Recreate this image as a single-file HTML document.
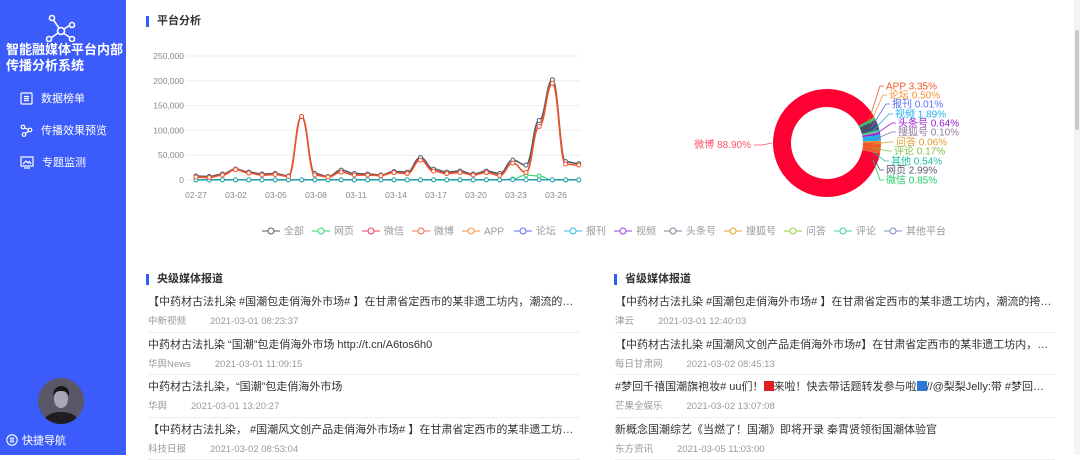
<!DOCTYPE html>
<html><head><meta charset="utf-8"><style>
*{margin:0;padding:0;box-sizing:border-box}
body{width:1080px;height:455px;overflow:hidden;background:#fff;font-family:"Liberation Sans","Noto Sans CJK SC",sans-serif;position:relative}
.side{position:absolute;left:0;top:0;width:126px;height:455px;background:#3b5bfb;color:#fff}
.title{position:absolute;left:6px;top:42px;font-size:13px;font-weight:bold;line-height:16px}
.nav{position:absolute;left:20px;font-size:11px;display:flex;align-items:center}
.nav svg{margin-right:8px}
.main{position:absolute;left:126px;top:0;width:954px;height:455px}
.h{position:absolute;font-size:11px;font-weight:bold;color:#333;padding-left:8px;border-left:3px solid #2f5bff;line-height:11px}
.list{position:absolute;width:432px}
.it{height:42.5px;border-bottom:1px solid #eee;padding-top:5px}
.it .t{font-size:11px;color:#333;white-space:nowrap;overflow:hidden;text-overflow:ellipsis;line-height:14px}
.it .m{font-size:9.5px;color:#999;margin-top:4px}
.it .m span{margin-left:24px}
.scroll{position:absolute;right:0;top:0;width:6px;height:455px;background:#f4f4f4}
.scroll div{position:absolute;left:1px;top:30px;width:4px;height:100px;background:#c8c8c8;border-radius:2px}
</style></head><body>
<div class="side">
<svg style="position:absolute;left:44px;top:14px" width="34" height="28" viewBox="0 0 34 28" fill="none" stroke="#fff" stroke-width="1.6"><circle cx="8" cy="4" r="2.5"/><circle cx="28" cy="11" r="2.5"/><circle cx="17" cy="17" r="3.5"/><circle cx="5" cy="25" r="2.5"/><circle cx="28" cy="25" r="2.5"/><path d="M9.5 6L15 14M25.5 11.5L20 15M7 24L14 19M20 19.5L26 23.5"/></svg>
<div class="title">智能融媒体平台内部<br>传播分析系统</div>
<div class="nav" style="top:90px"><svg width="13" height="13" viewBox="0 0 13 13" fill="none" stroke="#fff" stroke-width="1.2"><rect x="1" y="1" width="11" height="11" rx="1"/><path d="M4 4.5h5M4 6.5h5M4 8.5h5"/></svg>数据榜单</div>
<div class="nav" style="top:122px"><svg width="13" height="13" viewBox="0 0 13 13" fill="none" stroke="#fff" stroke-width="1.2"><circle cx="3" cy="3" r="1.8"/><circle cx="10" cy="6" r="1.8"/><circle cx="4" cy="10.5" r="1.8"/><path d="M4.6 4L8.4 5.5M8.5 7L5.5 9.5"/></svg>传播效果预览</div>
<div class="nav" style="top:154px"><svg width="14" height="13" viewBox="0 0 14 13" fill="none" stroke="#fff" stroke-width="1.2"><rect x="1" y="1" width="12" height="9"/><path d="M3 8l3-3 2 2 1.5-1.5L11 8M4 12h6"/></svg>专题监测</div>
<svg style="position:absolute;left:38px;top:378px" width="46" height="46" viewBox="0 0 46 46"><defs><clipPath id="c"><circle cx="23" cy="23" r="23"/></clipPath></defs><g clip-path="url(#c)"><rect width="46" height="46" fill="#5a5868"/><path d="M4 46c2-9 10-12 19-12s17 3 19 12z" fill="#1e1d24"/><ellipse cx="23" cy="21" rx="7" ry="9" fill="#a9a7b4"/><path d="M15 18c0-7 4-10 8-10s9 2 8 10c-2-4-4-5-8-5s-6 1-8 5z" fill="#18171c"/></g></svg>
<div class="nav" style="left:6px;top:432px"><svg width="12" height="12" viewBox="0 0 12 12" fill="none" stroke="#fff" stroke-width="1.1"><circle cx="6" cy="6" r="5.2"/><path d="M3.8 4.2h4.4M3.8 6h4.4M3.8 7.8h4.4"/></svg><span style="margin-left:-4px">快捷导航</span></div>
</div>
<div class="main">
<div class="h" style="left:20px;top:16px">平台分析</div>
<div class="h" style="left:20px;top:274px">央级媒体报道</div>
<div class="h" style="left:488px;top:274px">省级媒体报道</div>
<div class="scroll"><div></div></div>
</div>
<svg id="ch" style="position:absolute;left:0;top:0" width="1080" height="260" font-family="Liberation Sans, Noto Sans CJK SC, sans-serif"></svg>
<div class="list" style="left:148px;top:290px">
<div class="it"><div class="t">【中药材古法扎染 #国潮包走俏海外市场# 】在甘肃省定西市的某非遗工坊内，潮流的挎包、斜挎包等…</div><div class="m">中新视频<span>2021-03-01 08:23:37</span></div></div>
<div class="it"><div class="t">中药材古法扎染 “国潮”包走俏海外市场 http://t.cn/A6tos6h0</div><div class="m">华舆News<span>2021-03-01 11:09:15</span></div></div>
<div class="it"><div class="t">中药材古法扎染，“国潮”包走俏海外市场</div><div class="m">华舆<span>2021-03-01 13:20:27</span></div></div>
<div class="it"><div class="t">【中药材古法扎染， #国潮风文创产品走俏海外市场# 】在甘肃省定西市的某非遗工坊内，潮流的挎包…</div><div class="m">科技日报<span>2021-03-02 08:53:04</span></div></div>
</div>
<div class="list" style="left:615px;top:290px;width:440px">
<div class="it"><div class="t">【中药材古法扎染 #国潮包走俏海外市场# 】在甘肃省定西市的某非遗工坊内，潮流的挎包、时尚的…</div><div class="m">津云<span>2021-03-01 12:40:03</span></div></div>
<div class="it"><div class="t">【中药材古法扎染 #国潮风文创产品走俏海外市场#】在甘肃省定西市的某非遗工坊内，潮流的挎包…</div><div class="m">每日甘肃网<span>2021-03-02 08:45:13</span></div></div>
<div class="it"><div class="t">#梦回千禧国潮旗袍妆# uu们！<span style="display:inline-block;width:10px;height:10px;background:#e02020;vertical-align:-1px"></span>来啦！快去带话题转发参与啦<span style="display:inline-block;width:10px;height:10px;background:#2a7ad8;vertical-align:-1px"></span>//@梨梨Jelly:带 #梦回千禧国潮旗袍妆#…</div><div class="m">芒果全娱乐<span>2021-03-02 13:07:08</span></div></div>
<div class="it"><div class="t">新概念国潮综艺《当燃了！国潮》即将开录 秦霄贤领衔国潮体验官</div><div class="m">东方资讯<span>2021-03-05 11:03:00</span></div></div>
</div>
<script>
var s='';
var Y=function(v){return 180-v*0.496};
var yl=['0','50,000','100,000','150,000','200,000','250,000'];
for(var i=0;i<6;i++){var y=180-i*24.8;s+='<line x1="186" x2="580" y1="'+y+'" y2="'+y+'" stroke="#eee"/><text x="184" y="'+(y+3)+'" font-size="8.5" fill="#888" text-anchor="end">'+yl[i]+'</text>';}
var xl=['02-27','03-02','03-05','03-08','03-11','03-14','03-17','03-20','03-23','03-26'];
for(i=0;i<10;i++)s+='<text x="'+(196+i*40)+'" y="198" font-size="8.5" fill="#888" text-anchor="middle">'+xl[i]+'</text>';
var A=[8,7,12,22,16,12,13,8,128,13,7,20,13,12,10,17,16,45,22,16,18,12,18,13,40,30,120,202,37,33];
var W=[6,5,10,21,14,10,11,7,128,10,6,16,10,10,9,15,13,40,18,13,15,10,15,9,34,15,108,195,32,30];
var G=[];for(i=0;i<30;i++)G.push(i==25?10:i==26?8:i==24?2:0);
function X(i){return 196+i*13.2}
function path(d,c,w){var p='M'+X(0)+' '+Y(d[0]);for(var i=1;i<d.length;i++){var x0=X(i-1),x1=X(i);p+=' C'+(x0+6)+' '+Y(d[i-1])+' '+(x1-6)+' '+Y(d[i])+' '+x1+' '+Y(d[i]);}
var r='<path d="'+p+'" fill="none" stroke="'+c+'" stroke-width="'+w+'"/>';for(i=0;i<d.length;i++)r+='<circle cx="'+X(i)+'" cy="'+Y(d[i])+'" r="2" fill="#fff" stroke="'+c+'" stroke-width="1"/>';return r;}
var Z=[];for(i=0;i<30;i++)Z.push(0.5);
s+=path(G,'#2bd96a',1.2)+path(Z,'#2aa0b0',1.5)+path(A,'#555a6e',1.6)+path(W,'#f0522a',1.6);
var lg=[['全部','#555a6e'],['网页','#2bd96a'],['微信','#ef3a5a'],['微博','#f0705a'],['APP','#f5903a'],['论坛','#5a6ef5'],['报刊','#3ab8f0'],['视频','#9a40d0'],['头条号','#8a7a9a'],['搜狐号','#e0a030'],['问答','#90d040'],['评论','#40d0a0'],['其他平台','#7a90c0']];
var x=262;for(i=0;i<lg.length;i++){var c=lg[i][1];s+='<line x1="'+x+'" x2="'+(x+18)+'" y1="231" y2="231" stroke="'+c+'"/><circle cx="'+(x+9)+'" cy="231" r="3" fill="#fff" stroke="'+c+'"/><text x="'+(x+22)+'" y="234.5" font-size="10" fill="#999">'+lg[i][0]+'</text>';x+=22+lg[i][0].length*10+(lg[i][0]=='APP'?-8:0)+8;}
var cx=827,cy=143,R=54,r=36;
var seg=[[88.90,'#ff0033'],[0.85,'#22cc66'],[2.99,'#4a4e68'],[0.54,'#20c0a0'],[0.17,'#80d040'],[0.06,'#e0a030'],[0.10,'#b0a0c0'],[0.64,'#9a20d0'],[1.89,'#20b0f0'],[0.01,'#5a6ef5'],[0.50,'#f59030'],[3.35,'#f05a2a']];
function pt(rr,t){return (cx+rr*Math.cos(t)).toFixed(2)+' '+(cy+rr*Math.sin(t)).toFixed(2)}
var t=0.2;
for(i=0;i<seg.length;i++){var t2=t+seg[i][0]/100*2*Math.PI;var lf=(t2-t)>Math.PI?1:0;s+='<path d="M'+pt(R,t)+' A'+R+' '+R+' 0 '+lf+' 1 '+pt(R,t2)+' L'+pt(r,t2)+' A'+r+' '+r+' 0 '+lf+' 0 '+pt(r,t)+'Z" fill="'+seg[i][1]+'"/>';t=t2;}
var lb=[['APP 3.35%','#f05a2a',86],['论坛 0.50%','#f59030',95],['报刊 0.01%','#5a6ef5',104],['视频 1.89%','#20b0f0',114],['头条号 0.64%','#9a20d0',123],['搜狐号 0.10%','#8a7a9a',132],['问答 0.06%','#e0a030',142],['评论 0.17%','#80c040',151],['其他 0.54%','#20c0a0',161],['网页 2.99%','#555a6e',170],['微信 0.85%','#22cc66',180]];
for(i=0;i<lb.length;i++){var ly=lb[i][2],lx=884+(i<5?i*3:i<7?12-(i-5)*2:i<9?8-(i-7)*3:0);s+='<polyline points="'+(869+Math.min(i,4))+','+(120+i*4)+' '+(lx-4)+','+ly+' '+lx+','+ly+'" fill="none" stroke="'+lb[i][1]+'" stroke-width="0.8"/><text x="'+(lx+2)+'" y="'+(ly+3.5)+'" font-size="10" fill="'+lb[i][1]+'">'+lb[i][0]+'</text>';}
s+='<polyline points="772,143 762,145 754,145" fill="none" stroke="#ff5070" stroke-width="0.8"/><text x="751" y="148" font-size="10" fill="#ff5070" text-anchor="end">微博 88.90%</text>';
document.getElementById('ch').innerHTML=s;
</script>
</body></html>
